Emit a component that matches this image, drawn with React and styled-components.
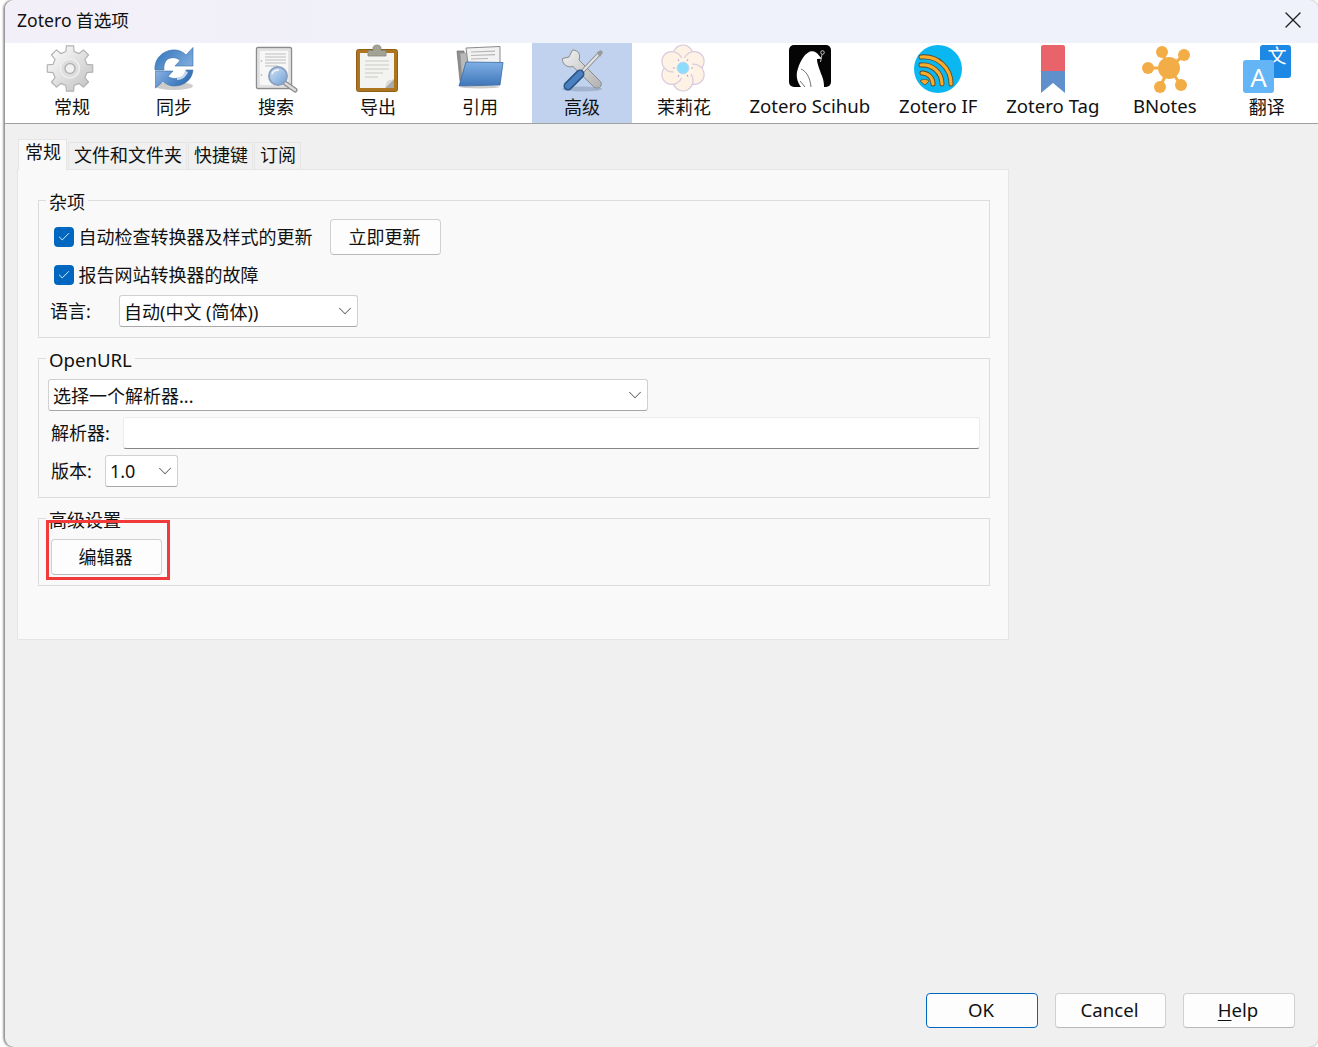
import React from "react";
import styled, { createGlobalStyle } from "styled-components";
import { ChevronDown, Check, X } from "lucide-react";

const FONT = `"Noto Sans", "Noto Sans CJK SC", sans-serif`;

const GlobalStyle = createGlobalStyle`
  html, body {
    margin: 0;
    padding: 0;
    background: #fff;
  }
  * {
    box-sizing: border-box;
  }
`;

const Win = styled.div`
  margin-left: 5px;
  height: 1047px;
  display: flex;
  flex-direction: column;
  overflow: hidden;
  background: #f0f0f0;
  border-radius: 9px;
  box-shadow: -2px 0 2px rgba(0, 0, 0, 0.32), 0 0 3px rgba(0, 0, 0, 0.4);
  font-family: ${FONT};
  font-size: 18px;
  color: #111;
`;

const TitleBar = styled.div`
  height: 43px;
  flex: none;
  display: flex;
  align-items: center;
  justify-content: space-between;
  padding: 0 11px 3px 12px;
  background: linear-gradient(90deg, #f3eff8, #eff2fb 45%, #eff2fb);
`;

const TitleText = styled.span`
  line-height: 24px;
  font-size: 17.6px;
`;

const Toolbar = styled.div`
  height: 81px;
  flex: none;
  display: flex;
  padding-left: 16px;
  background: #fff;
  border-bottom: 1px solid #a0a0a0;
`;

const ToolItem = styled.div`
  min-width: 100px;
  margin: 0 1px;
  padding: 2px 13.4px 0;
  display: flex;
  flex-direction: column;
  align-items: center;
  background: ${(p) => (p.$active ? "#c0d2ee" : "transparent")};
  white-space: nowrap;
`;

const ToolIcon = styled.svg`
  width: 48px;
  height: 48px;
  flex: none;
  overflow: visible;
`;

const ToolLabel = styled.span`
  line-height: 25px;
  margin-top: ${(p) => (p.$latin ? "0" : "2px")};
  font-size: ${(p) => (p.$latin ? "18.6px" : "18px")};
`;

const Content = styled.div`
  flex: 1;
  display: flex;
  flex-direction: column;
  padding: 16px 0 0 12px;
`;

const TabRow = styled.div`
  height: 30px;
  display: flex;
  align-items: flex-end;
  margin-left: 1px;
  gap: 1px;
  margin-bottom: -1px;
  position: relative;
  z-index: 1;
`;

const Tab = styled.div`
  height: ${(p) => (p.$active ? "31px" : "28px")};
  padding: ${(p) => (p.$active ? "0 5px 0 6px" : "0 4px 0 5px")};
  line-height: 24px;
  background: ${(p) => (p.$active ? "#f9f9f9" : "#f0f0f0")};
  border: 1px solid #e5e5e5;
  border-bottom: ${(p) => (p.$active ? "none" : "1px solid #e5e5e5")};
`;

const Panel = styled.div`
  width: 992px;
  height: 471px;
  padding: 30px 18px 0 20px;
  display: flex;
  flex-direction: column;
  gap: 20px;
  background: #f9f9f9;
  border: 1px solid #e5e5e5;
`;

const Group = styled.div`
  position: relative;
  display: flex;
  flex-direction: column;
  gap: ${(p) => p.$gap}px;
  padding: ${(p) => p.$top}px 9px 10px;
  border: 1px solid #dcdcdc;
`;

const Caption = styled.div`
  position: absolute;
  top: -11px;
  left: 7px;
  padding: 0 3px;
  line-height: 24px;
  font-size: ${(p) => (p.$latin ? "18.6px" : "18px")};
  background: #f9f9f9;
`;

const CheckRow = styled.div`
  height: 36px;
  display: flex;
  align-items: center;
  padding-left: 6px;
`;

const CheckText = styled.span`
  padding-bottom: 2px;
`;

const CheckBox = styled.div`
  width: 20px;
  height: 20px;
  margin-right: 4.5px;
  display: flex;
  align-items: center;
  justify-content: center;
  background: #0067c0;
  border-radius: 4px;
  color: #fff;
`;

const FieldRow = styled.div`
  height: 32px;
  display: flex;
  align-items: center;
  padding-left: ${(p) => p.$indent || 0}px;
`;

const FieldLabel = styled.span`
  width: ${(p) => p.$w}px;
  flex: none;
  padding-bottom: 2px;
`;

const Select = styled.div`
  width: ${(p) => p.$w}px;
  height: 32px;
  display: flex;
  align-items: center;
  justify-content: space-between;
  padding: 0 1px 0 4px;
  background: #fff;
  border: 1px solid #d0d0d0;
  border-bottom-color: #a8a8a8;
  border-radius: 3px;
  color: #666;
`;

const SelectText = styled.span`
  color: #111;
`;

const TextInput = styled.div`
  width: 857px;
  height: 32px;
  background: #fff;
  border: 1px solid #ececec;
  border-bottom: 1px solid #868686;
  border-radius: 3px;
`;

const Button = styled.div`
  width: ${(p) => p.$w}px;
  height: ${(p) => p.$h || 36}px;
  margin-left: ${(p) => p.$ml || 0}px;
  flex: none;
  display: flex;
  align-items: center;
  justify-content: center;
  padding: 0 2px 2px 0;
  font-size: ${(p) => p.$fs || 18}px;
  background: #fdfdfd;
  border: 1px solid ${(p) => (p.$primary ? "#0067c0" : "#d0d0d0")};
  border-bottom-color: ${(p) => (p.$primary ? "#0067c0" : "#b8b8b8")};
  border-radius: 4px;
`;

const Mark = styled.div`
  position: absolute;
  left: 7px;
  top: 1px;
  width: 124px;
  height: 60px;
  border: 3px solid #f23a3a;
`;

const ButtonWrap = styled.div`
  padding-left: 3px;
  position: relative;
`;

const Footer = styled.div`
  margin-top: auto;
  display: flex;
  justify-content: flex-end;
  gap: 17px;
  padding: 0 23px 19px 0;
`;

const Under = styled.span`
  text-decoration: underline;
  text-underline-offset: 3px;
`;

function gearPath(cx, cy, rOut, rIn, teeth) {
  const pts = [];
  const step = (Math.PI * 2) / teeth;
  for (let i = 0; i < teeth; i++) {
    const a = i * step - Math.PI / 2;
    const w = step * 0.2;
    const w2 = step * 0.3;
    const p = (r, t) => `${(cx + r * Math.cos(t)).toFixed(2)} ${(cy + r * Math.sin(t)).toFixed(2)}`;
    pts.push(`${p(rIn, a - w2)}`, `${p(rOut, a - w)}`, `${p(rOut, a + w)}`, `${p(rIn, a + w2)}`);
  }
  return "M" + pts.join("L") + "Z";
}

const GearIcon = () => (
  <ToolIcon viewBox="0 0 48 48">
    <defs>
      <linearGradient id="gearFill" x1="0.1" y1="0.1" x2="0.9" y2="0.9">
        <stop offset="0" stopColor="#fafafa" />
        <stop offset="1" stopColor="#c6c6c6" />
      </linearGradient>
    </defs>
    <path d={gearPath(22, 23.5, 23, 17.5, 8)} fill="url(#gearFill)" stroke="#b2b2b2" strokeWidth="1.2" strokeLinejoin="round" />
    <circle cx="22" cy="23.5" r="9.5" fill="#dedede" stroke="#efefef" strokeWidth="1.5" />
    <circle cx="22" cy="23.5" r="5" fill="#f2f2f2" stroke="#b4b4b4" strokeWidth="1.5" />
  </ToolIcon>
);

const SyncIcon = () => (
  <ToolIcon viewBox="0 0 48 48">
    <defs>
      <linearGradient id="syncTop" x1="0" y1="0" x2="1" y2="0.6">
        <stop offset="0" stopColor="#2f72b8" />
        <stop offset="1" stopColor="#7aa9dc" />
      </linearGradient>
      <linearGradient id="syncBottom" x1="0" y1="0" x2="1" y2="0.4">
        <stop offset="0" stopColor="#8db4e2" />
        <stop offset="0.6" stopColor="#4f88c8" />
        <stop offset="1" stopColor="#2f6cb0" />
      </linearGradient>
    </defs>
    <ellipse cx="24" cy="41" rx="19" ry="4" fill="#555" opacity="0.3" />
    <path d="M5 25C4 12 15 4 26 5C30 5.5 33 7 36 10L43 2.5V21H25L30 15.5C27 12.5 23 12 19 13.5C15 15 13.5 20 14 25Z" fill="url(#syncTop)" stroke="#3a6fa8" strokeWidth="0.6" />
    <path d="M43 25C42 35 34 41 24 41C20 41 16 39 13 36.5L5.5 43V26H23L18 31.5C21 33.5 25 34 28 33C33 32 35 28.5 36 25Z" fill="url(#syncBottom)" stroke="#3a6fa8" strokeWidth="0.6" />
    <path d="M27 33C31 32 34 29 35.5 26L38 27C36 32 32 35 27 35Z" fill="#fff" opacity="0.7" />
  </ToolIcon>
);

const SearchIcon = () => (
  <ToolIcon viewBox="0 0 48 48">
    <defs>
      <linearGradient id="lensFill" x1="0" y1="0" x2="1" y2="1">
        <stop offset="0" stopColor="#d5e5f6" />
        <stop offset="1" stopColor="#6f9fd6" />
      </linearGradient>
    </defs>
    <rect x="4.5" y="2.5" width="35" height="41" rx="1.5" fill="#eeeeee" stroke="#8c8c8c" strokeWidth="1.4" />
    <rect x="7" y="5" width="30" height="36" fill="#f7f7f7" stroke="#d2d2d2" />
    <path d="M13 9H34M13 12H34M13 15H34M13 18H34M13 21H26" stroke="#bdbdbd" strokeWidth="1" />
    <circle cx="9.5" cy="16" r="0.8" fill="#aaa" />
    <circle cx="9.5" cy="30" r="0.8" fill="#aaa" />
    <path d="M33 38L43 45" stroke="#8c8c8c" strokeWidth="5" strokeLinecap="round" />
    <path d="M33 38L43 45" stroke="#dcdcdc" strokeWidth="2.5" strokeLinecap="round" />
    <circle cx="26" cy="31" r="9" fill="url(#lensFill)" stroke="#8aa0bc" strokeWidth="2" />
    <path d="M20 29C21 26 24 25 27 25" stroke="#fff" strokeWidth="1.5" fill="none" opacity="0.8" />
  </ToolIcon>
);

const ClipIcon = () => (
  <ToolIcon viewBox="0 0 48 48">
    <rect x="2.5" y="4.5" width="41" height="42" rx="2" fill="#ad751f" stroke="#8f5f17" />
    <rect x="6" y="8" width="34" height="35" fill="#f3f3f1" />
    <path d="M11 16H35M11 20H35M11 24H35M11 28H29M11 32H24" stroke="#c9c9c5" strokeWidth="1.2" />
    <path d="M40 34V43H31Z" fill="#a9a9a7" />
    <path d="M31 43L33 36L40 34Z" fill="#d8d8d6" />
    <path d="M14 5.5H19V3C19 1 21 0 23 0C25 0 27 1 27 3V5.5H32V11H14Z" fill="#a3a395" stroke="#85857a" strokeWidth="0.8" />
  </ToolIcon>
);

const FolderIcon = () => (
  <ToolIcon viewBox="0 0 48 48">
    <defs>
      <linearGradient id="folderFill" x1="0" y1="0" x2="0" y2="1">
        <stop offset="0" stopColor="#7fb0e6" />
        <stop offset="1" stopColor="#3f76b8" />
      </linearGradient>
    </defs>
    <path d="M1 6H8L10 36H4Z" fill="#8f8f8f" stroke="#6f6f6f" strokeWidth="0.7" />
    <path d="M4 8H12V36H6Z" fill="#b9b9b9" stroke="#888" strokeWidth="0.5" />
    <path d="M10 3L44 1.5V19H12Z" fill="#f2f2f2" stroke="#8a8a8a" strokeWidth="1" />
    <path d="M15 7L39 6.2M15 10.5L39 9.7M15 14L32 13.5" stroke="#b5b5b5" strokeWidth="1.2" />
    <path d="M10 17L47 17.5L44 40L3 41Z" fill="url(#folderFill)" stroke="#3a6aa5" strokeWidth="0.8" strokeLinejoin="round" />
    <ellipse cx="24" cy="42" rx="20" ry="1.5" fill="#555" opacity="0.3" />
  </ToolIcon>
);

const ToolsIcon = () => (
  <ToolIcon viewBox="0 0 48 48">
    <defs>
      <linearGradient id="metal" x1="0" y1="0" x2="1" y2="1">
        <stop offset="0" stopColor="#f2f2f2" />
        <stop offset="1" stopColor="#b0b0b0" />
      </linearGradient>
    </defs>
    <ellipse cx="24" cy="44" rx="20" ry="2.5" fill="#6a7a90" opacity="0.35" />
    <path d="M14.5 5L11 12L4.5 13.5C4 19 9 23 15 21.5L36 42C38.5 44 43 43 43 40C44 38 43 37 42 36L21 15C23 9 20 5 14.5 5Z" fill="url(#metal)" stroke="#8b8b8b" strokeWidth="1" strokeLinejoin="round" />
    <path d="M40 10L23 28" stroke="#888" strokeWidth="4" />
    <path d="M40 10L23 28" stroke="#e6e6e6" strokeWidth="2.2" />
    <path d="M38.5 7.5L43 5L45 7.5L42 12Z" fill="#9a9a9a" />
    <path d="M22 29L10 41" stroke="#2a5488" strokeWidth="9" strokeLinecap="round" />
    <path d="M22 29L10 41" stroke="#4a7fc0" strokeWidth="6" strokeLinecap="round" />
  </ToolIcon>
);

const FlowerIcon = () => (
  <ToolIcon viewBox="0 0 48 48">
    <g fill="#fdf2e4" stroke="#d9c9de" strokeWidth="1.2">
      {[0, 60, 120, 180, 240, 300].map((a) => (
        <ellipse key={a} cx="23" cy="10.5" rx="10" ry="10.5" transform={`rotate(${a} 23 23)`} />
      ))}
    </g>
    <circle cx="23" cy="23" r="10" fill="#fff6ea" />
    <g stroke="#b8a4c8" strokeWidth="1.2">
      {[30, 90, 150, 210, 270, 330].map((a) => (
        <line key={a} x1="23" y1="13" x2="23" y2="15" transform={`rotate(${a} 23 23)`} />
      ))}
    </g>
    <circle cx="23" cy="23" r="6" fill="#8edcfc" stroke="#c7d8ea" />
  </ToolIcon>
);

const PenguinIcon = () => (
  <ToolIcon viewBox="0 0 48 48">
    <rect x="3" y="0" width="42" height="42" rx="5" fill="#050505" />
    <path d="M24 6.5C28 5.5 31 7.5 33 10.5L35.5 13.5L31 14C31 18 33 23 36 31C38 36 38 40 38 42H15C12 38 10 33 11 27C13 19 17 9.5 24 6.5Z" fill="#fff" />
    <path d="M15 24C20 26 24 32 25 42M14 36L19 42" stroke="#333" strokeWidth="0.7" fill="none" />
    <circle cx="36.5" cy="7.5" r="1.8" fill="none" stroke="#eee" strokeWidth="0.8" />
    <path d="M36 9.5L34.5 17M32 13.5L35 13" stroke="#eee" strokeWidth="0.8" />
  </ToolIcon>
);

const FeedIcon = () => (
  <ToolIcon viewBox="0 0 48 48">
    <circle cx="24" cy="24" r="24" fill="#0bb7f1" />
    <g fill="none" stroke="#5c4a2a" strokeWidth="5" strokeLinecap="round">
      <path d="M7 12A27 27 0 0 1 37 39" />
      <path d="M7 20A19 19 0 0 1 28 39" />
      <path d="M8 28A11 11 0 0 1 19 39" />
    </g>
    <g fill="none" stroke="#f7ac2e" strokeWidth="3.2" strokeLinecap="round">
      <path d="M7 12A27 27 0 0 1 37 39" />
      <path d="M7 20A19 19 0 0 1 28 39" />
      <path d="M8 28A11 11 0 0 1 19 39" />
    </g>
    <path d="M6 36C8 34 13 34 15 36L11 40Z" fill="#f7ac2e" stroke="#5c4a2a" strokeWidth="0.8" />
  </ToolIcon>
);

const BookmarkIcon = () => (
  <ToolIcon viewBox="0 0 48 48">
    <path d="M12 26V2C12 1 13 0 14 0H34C35 0 36 1 36 2V26Z" fill="#e9636a" />
    <path d="M12 26H36V48L24 38L12 48Z" fill="#6090cc" />
  </ToolIcon>
);

const NotesIcon = () => (
  <ToolIcon viewBox="0 0 48 48">
    <g stroke="#f3ad47" strokeWidth="3">
      <path d="M28 23L21 7M28 23L43 10M28 23H7M28 23L19 42M28 23L40 40" />
    </g>
    <g fill="#f3ad47">
      <circle cx="28" cy="23" r="11" />
      <circle cx="21" cy="7" r="6" />
      <circle cx="43" cy="10" r="6" />
      <circle cx="7" cy="23" r="6" />
      <circle cx="19" cy="42" r="6" />
      <circle cx="40" cy="40" r="6" />
    </g>
  </ToolIcon>
);

const TranslateIcon = () => (
  <ToolIcon viewBox="0 0 48 48">
    <rect x="17" y="0" width="31" height="33" rx="3" fill="#1e88e5" />
    <text x="34" y="18" fontSize="19" fill="#fff" textAnchor="middle" fontFamily={FONT}>文</text>
    <rect x="0" y="15" width="31" height="33" rx="3" fill="#64b5f6" />
    <text x="15.5" y="42" fontSize="26" fill="#fff" textAnchor="middle" fontFamily={FONT}>A</text>
  </ToolIcon>
);

const tools = [
  { label: "常规", Icon: GearIcon },
  { label: "同步", Icon: SyncIcon },
  { label: "搜索", Icon: SearchIcon },
  { label: "导出", Icon: ClipIcon },
  { label: "引用", Icon: FolderIcon },
  { label: "高级", Icon: ToolsIcon, active: true },
  { label: "茉莉花", Icon: FlowerIcon },
  { label: "Zotero Scihub", Icon: PenguinIcon, latin: true },
  { label: "Zotero IF", Icon: FeedIcon, latin: true },
  { label: "Zotero Tag", Icon: BookmarkIcon, latin: true },
  { label: "BNotes", Icon: NotesIcon, latin: true },
  { label: "翻译", Icon: TranslateIcon },
];

const Check1 = () => (
  <CheckBox>
    <Check size={14} strokeWidth={1.5} />
  </CheckBox>
);

const Drop = ({ width, children }) => (
  <Select $w={width}>
    <SelectText>{children}</SelectText>
    <ChevronDown size={22} strokeWidth={1.1} />
  </Select>
);

export default function App() {
  return (
    <>
      <GlobalStyle />
      <Win>
        <TitleBar>
          <TitleText>Zotero 首选项</TitleText>
          <X size={28} strokeWidth={1.2} color="#222" />
        </TitleBar>
        <Toolbar>
          {tools.map(({ label, Icon, active, latin }) => (
            <ToolItem key={label} $active={active}>
              <Icon />
              <ToolLabel $latin={latin}>{label}</ToolLabel>
            </ToolItem>
          ))}
        </Toolbar>
        <Content>
          <TabRow>
            <Tab $active>常规</Tab>
            <Tab>文件和文件夹</Tab>
            <Tab>快捷键</Tab>
            <Tab>订阅</Tab>
          </TabRow>
          <Panel>
            <Group $gap={2} $top={18}>
              <Caption>杂项</Caption>
              <CheckRow>
                <Check1 />
                <CheckText>自动检查转换器及样式的更新</CheckText>
                <Button $w={111} $ml={17.5}>立即更新</Button>
              </CheckRow>
              <CheckRow>
                <Check1 />
                <CheckText>报告网站转换器的故障</CheckText>
              </CheckRow>
              <FieldRow $indent={2}>
                <FieldLabel $w={69}>语言:</FieldLabel>
                <Drop width={239}>自动(中文 (简体))</Drop>
              </FieldRow>
            </Group>
            <Group $gap={6} $top={20}>
              <Caption $latin>OpenURL</Caption>
              <FieldRow>
                <Drop width={600}>选择一个解析器...</Drop>
              </FieldRow>
              <FieldRow $indent={3}>
                <FieldLabel $w={72}>解析器:</FieldLabel>
                <TextInput />
              </FieldRow>
              <FieldRow $indent={3}>
                <FieldLabel $w={54}>版本:</FieldLabel>
                <Drop width={73}>1.0</Drop>
              </FieldRow>
            </Group>
            <Group $gap={0} $top={20}>
              <Caption>高级设置</Caption>
              <ButtonWrap>
                <Button $w={111}>编辑器</Button>
              </ButtonWrap>
              <Mark />
            </Group>
          </Panel>
          <Footer>
            <Button $w={112} $h={35} $fs={18.6} $primary>OK</Button>
            <Button $w={111} $h={35} $fs={18.6}>Cancel</Button>
            <Button $w={112} $h={35} $fs={18.6}><Under>H</Under>elp</Button>
          </Footer>
        </Content>
      </Win>
    </>
  );
}
